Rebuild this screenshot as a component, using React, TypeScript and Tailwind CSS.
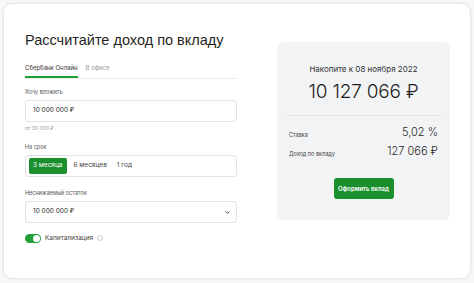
import { ChevronDown } from "lucide-react"

const terms = ["3 месяца", "6 месяцев", "1 год"]

export default function App() {
  return (
    <div className="h-[283px] w-[474px] bg-[#f7f7f7] p-[4px] font-['Inter',sans-serif] text-[#1f1f22]">
      <div className="flex h-[274px] w-[466px] rounded-[8px] bg-white shadow-[0_0_3px_rgba(0,0,0,0.18)]">
        <div className="w-[258px] pl-[21px] pr-[25px] pt-[25px]">
          <h1 className="whitespace-nowrap font-['Liberation_Sans',sans-serif] text-[14.5px] leading-[22px] font-normal">
            Рассчитайте доход по вкладу
          </h1>

          <div className="mt-[12px] flex gap-[8px] border-b border-[#ececec] text-[6px]">
            <div className="border-b-2 border-[#21a038] pb-[4px] text-[#333]">Сбербанк Онлайн</div>
            <div className="pb-[4px] text-[#999]">В офисе</div>
          </div>

          <div className="mt-[9px] text-[5.5px] text-[#555]">Хочу вложить</div>
          <div className="mt-[4px] flex h-[22px] items-center rounded-[3px] border border-[#e2e2e2] px-[7px] text-[6.5px]">
            10 000 000 ₽
          </div>
          <div className="mt-[3px] text-[5px] text-[#999]">от 30 000 ₽</div>

          <div className="mt-[10px] text-[5.5px] text-[#555]">На срок</div>
          <div className="mt-[4px] flex h-[22px] items-center gap-[4px] rounded-[3px] border border-[#e2e2e2] px-[3px] text-[6.5px]">
            {terms.map((t, i) => (
              <div
                key={t}
                className={
                  i === 0
                    ? "flex h-[16px] items-center rounded-[2px] bg-[#1a8f2e] px-[4px] text-white"
                    : "px-[3px] text-[#444]"
                }
              >
                {t}
              </div>
            ))}
          </div>

          <div className="mt-[12px] text-[5.5px] text-[#555]">Неснижаемый остаток</div>
          <div className="mt-[4px] flex h-[22px] items-center justify-between rounded-[3px] border border-[#e2e2e2] pl-[7px] pr-[5px] text-[6.5px]">
            <span>10 000 000 ₽</span>
            <ChevronDown className="h-[7px] w-[7px] text-[#333]" strokeWidth={3} />
          </div>

          <div className="mt-[10px] flex h-[10px] items-center gap-[4px] text-[6.5px] leading-none text-[#444]">
            <div className="flex h-[9px] w-[16px] items-center justify-end rounded-full bg-[#21a038] px-[1px]">
              <div className="h-[7px] w-[7px] rounded-full bg-white" />
            </div>
            <span className="leading-none">Капитализация</span>
            <span className="h-[6px] w-[6px] rounded-full border border-[#ccc]" />
          </div>
        </div>

        <div className="pl-[15px] pt-[38px]">
          <div className="flex h-[178px] w-[173px] flex-col items-center rounded-[7px] bg-[#f2f3f5] px-[8px] pt-[21px]">
            <div className="text-[8px] text-[#333]">Накопите к 08 ноября 2022</div>
            <div className="mt-[3px] text-[19px] leading-[28px] font-light tracking-[-0.2px]">10 127 066 ₽</div>
            <div className="mt-[9px] w-full border-t border-[#e6e7ea]" />
            <div className="mt-[10px] flex w-full items-end justify-between px-[4px]">
              <span className="text-[5.5px] text-[#444]">Ставка</span>
              <span className="text-[11px] leading-[13px] font-light">5,02 %</span>
            </div>
            <div className="mt-[6px] flex w-full items-end justify-between px-[4px]">
              <span className="text-[5.5px] text-[#444]">Доход по вкладу</span>
              <span className="text-[11px] leading-[13px] font-light">127 066 ₽</span>
            </div>
            <button className="mt-[20px] h-[21px] w-[60px] rounded-[3px] bg-[#1a8f2e] text-[6px] font-semibold text-white">
              Оформить вклад
            </button>
          </div>
        </div>
      </div>
    </div>
  )
}
